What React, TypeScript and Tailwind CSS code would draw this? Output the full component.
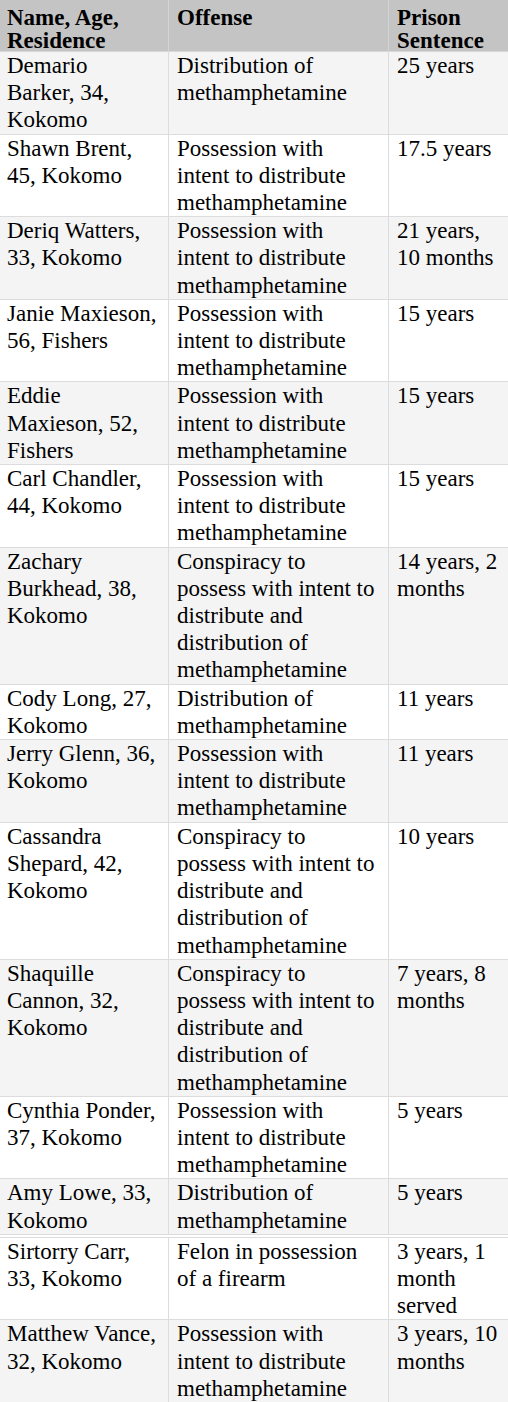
import React from "react";

type Row = { name: string[]; offense: string[]; sentence: string[] };

const POSS = ["Possession with", "intent to distribute", "methamphetamine"];
const DIST = ["Distribution of", "methamphetamine"];
const CONSP = [
  "Conspiracy to",
  "possess with intent to",
  "distribute and",
  "distribution of",
  "methamphetamine",
];

const rows: Row[] = [
  { name: ["Demario", "Barker, 34,", "Kokomo"], offense: DIST, sentence: ["25 years"] },
  { name: ["Shawn Brent,", "45, Kokomo"], offense: POSS, sentence: ["17.5 years"] },
  { name: ["Deriq Watters,", "33, Kokomo"], offense: POSS, sentence: ["21 years,", "10 months"] },
  { name: ["Janie Maxieson,", "56, Fishers"], offense: POSS, sentence: ["15 years"] },
  { name: ["Eddie", "Maxieson, 52,", "Fishers"], offense: POSS, sentence: ["15 years"] },
  { name: ["Carl Chandler,", "44, Kokomo"], offense: POSS, sentence: ["15 years"] },
  { name: ["Zachary", "Burkhead, 38,", "Kokomo"], offense: CONSP, sentence: ["14 years, 2", "months"] },
  { name: ["Cody Long, 27,", "Kokomo"], offense: DIST, sentence: ["11 years"] },
  { name: ["Jerry Glenn, 36,", "Kokomo"], offense: POSS, sentence: ["11 years"] },
  { name: ["Cassandra", "Shepard, 42,", "Kokomo"], offense: CONSP, sentence: ["10 years"] },
  { name: ["Shaquille", "Cannon, 32,", "Kokomo"], offense: CONSP, sentence: ["7 years, 8", "months"] },
  { name: ["Cynthia Ponder,", "37, Kokomo"], offense: POSS, sentence: ["5 years"] },
  { name: ["Amy Lowe, 33,", "Kokomo"], offense: DIST, sentence: ["5 years"] },
  { name: ["Sirtorry Carr,", "33, Kokomo"], offense: ["Felon in possession", "of a firearm"], sentence: ["3 years, 1", "month", "served"] },
  { name: ["Matthew Vance,", "32, Kokomo"], offense: POSS, sentence: ["3 years, 10", "months"] },
];

function Lines({ lines }: { lines: string[] }) {
  return (
    <>
      {lines.map((l, i) => (
        <div key={i} className="whitespace-nowrap">
          {l}
        </div>
      ))}
    </>
  );
}

export default function App() {
  return (
    <div className="w-[508px] bg-white text-black text-[23px] font-['Liberation_Serif','Times_New_Roman',serif]">
      <div className="flex bg-[#c4c4c4] border-b border-[#d8d8d8] font-bold leading-[23px] h-[52px]">
        <div className="w-[168px] pl-[7px] pt-[6px]">
          <Lines lines={["Name, Age,", "Residence"]} />
        </div>
        <div className="w-[220px] border-l border-[#d4d4d4] pl-[8px] pt-[6px]">
          <Lines lines={["Offense"]} />
        </div>
        <div className="w-[120px] border-l border-[#d4d4d4] pl-[8px] pt-[6px]">
          <Lines lines={["Prison", "Sentence"]} />
        </div>
      </div>
      {rows.map((r, i) => (
        <div
          key={i}
          className={`flex leading-[27.2px] border-b border-[#dcdcdc] ${
            i % 2 === 0 ? "bg-[#f4f4f4]" : "bg-white"
          } ${i === 13 ? "border-t mt-[2px]" : ""}`}
        >
          <div className="w-[168px] pl-[7px]">
            <Lines lines={r.name} />
          </div>
          <div className="w-[220px] border-l border-[#dcdcdc] pl-[8px]">
            <Lines lines={r.offense} />
          </div>
          <div className="w-[120px] border-l border-[#dcdcdc] pl-[8px]">
            <Lines lines={r.sentence} />
          </div>
        </div>
      ))}
    </div>
  );
}
